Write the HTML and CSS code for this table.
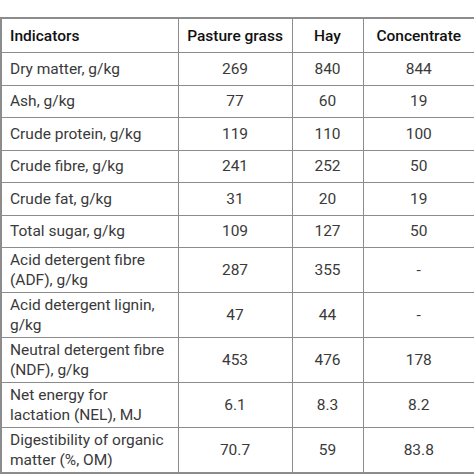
FILE: index.html
```html
<!DOCTYPE html>
<html lang="en">
<head>
    <meta charset="UTF-8">
    <title>Chemical composition</title>
    <link rel="stylesheet" href="styles.css">
</head>
<body>

<table class="data-table">
    <colgroup>
        <col class="col-name">
        <col class="col-grass">
        <col class="col-hay">
        <col class="col-conc">
    </colgroup>
    <thead>
        <tr>
            <th class="name">Indicators</th>
            <th>Pasture grass</th>
            <th>Hay</th>
            <th>Concentrate</th>
        </tr>
    </thead>
    <tbody>
        <tr><td class="name">Dry matter, g/kg</td><td>269</td><td>840</td><td>844</td></tr>
        <tr><td class="name">Ash, g/kg</td><td>77</td><td>60</td><td>19</td></tr>
        <tr><td class="name">Crude protein, g/kg</td><td>119</td><td>110</td><td>100</td></tr>
        <tr><td class="name">Crude fibre, g/kg</td><td>241</td><td>252</td><td>50</td></tr>
        <tr><td class="name">Crude fat, g/kg</td><td>31</td><td>20</td><td>19</td></tr>
        <tr><td class="name">Total sugar, g/kg</td><td>109</td><td>127</td><td>50</td></tr>
        <tr class="tall"><td class="name">Acid detergent fibre<br>(ADF), g/kg</td><td>287</td><td>355</td><td>-</td></tr>
        <tr class="tall"><td class="name">Acid detergent lignin,<br>g/kg</td><td>47</td><td>44</td><td>-</td></tr>
        <tr class="tall"><td class="name">Neutral detergent fibre<br>(NDF), g/kg</td><td>453</td><td>476</td><td>178</td></tr>
        <tr class="tall"><td class="name">Net energy for<br>lactation (NEL), MJ</td><td>6.1</td><td>8.3</td><td>8.2</td></tr>
        <tr class="tall"><td class="name">Digestibility of organic<br>matter (%, OM)</td><td>70.7</td><td>59</td><td>83.8</td></tr>
    </tbody>
</table>

</body>
</html>
```

FILE: styles.css
```css
/* Styles */
body {
    margin: 0;
    padding-top: 17px;
    background: #fff;
    font-family: Roboto, "Liberation Sans", sans-serif;
    color: #3a3a3a;
}
.data-table {
    width: 474px;
    border-collapse: collapse;
    table-layout: fixed;
    border: 2px solid #8c8c8c;
    font-size: 15.5px;
}
.col-name { width: 177px; }
.col-grass { width: 114px; }
.col-hay { width: 71px; }
.col-conc { width: 112px; }
.data-table th,
.data-table td {
    border: 1px solid #8c8c8c;
    padding: 0 8px;
    text-align: center;
    height: 31.5px;
    line-height: 20px;
}
.data-table th {
    height: 33px;
    font-weight: 500;
    color: #111;
}
.data-table .name {
    text-align: left;
}
.data-table .tall td {
    height: 44px;
}
```
